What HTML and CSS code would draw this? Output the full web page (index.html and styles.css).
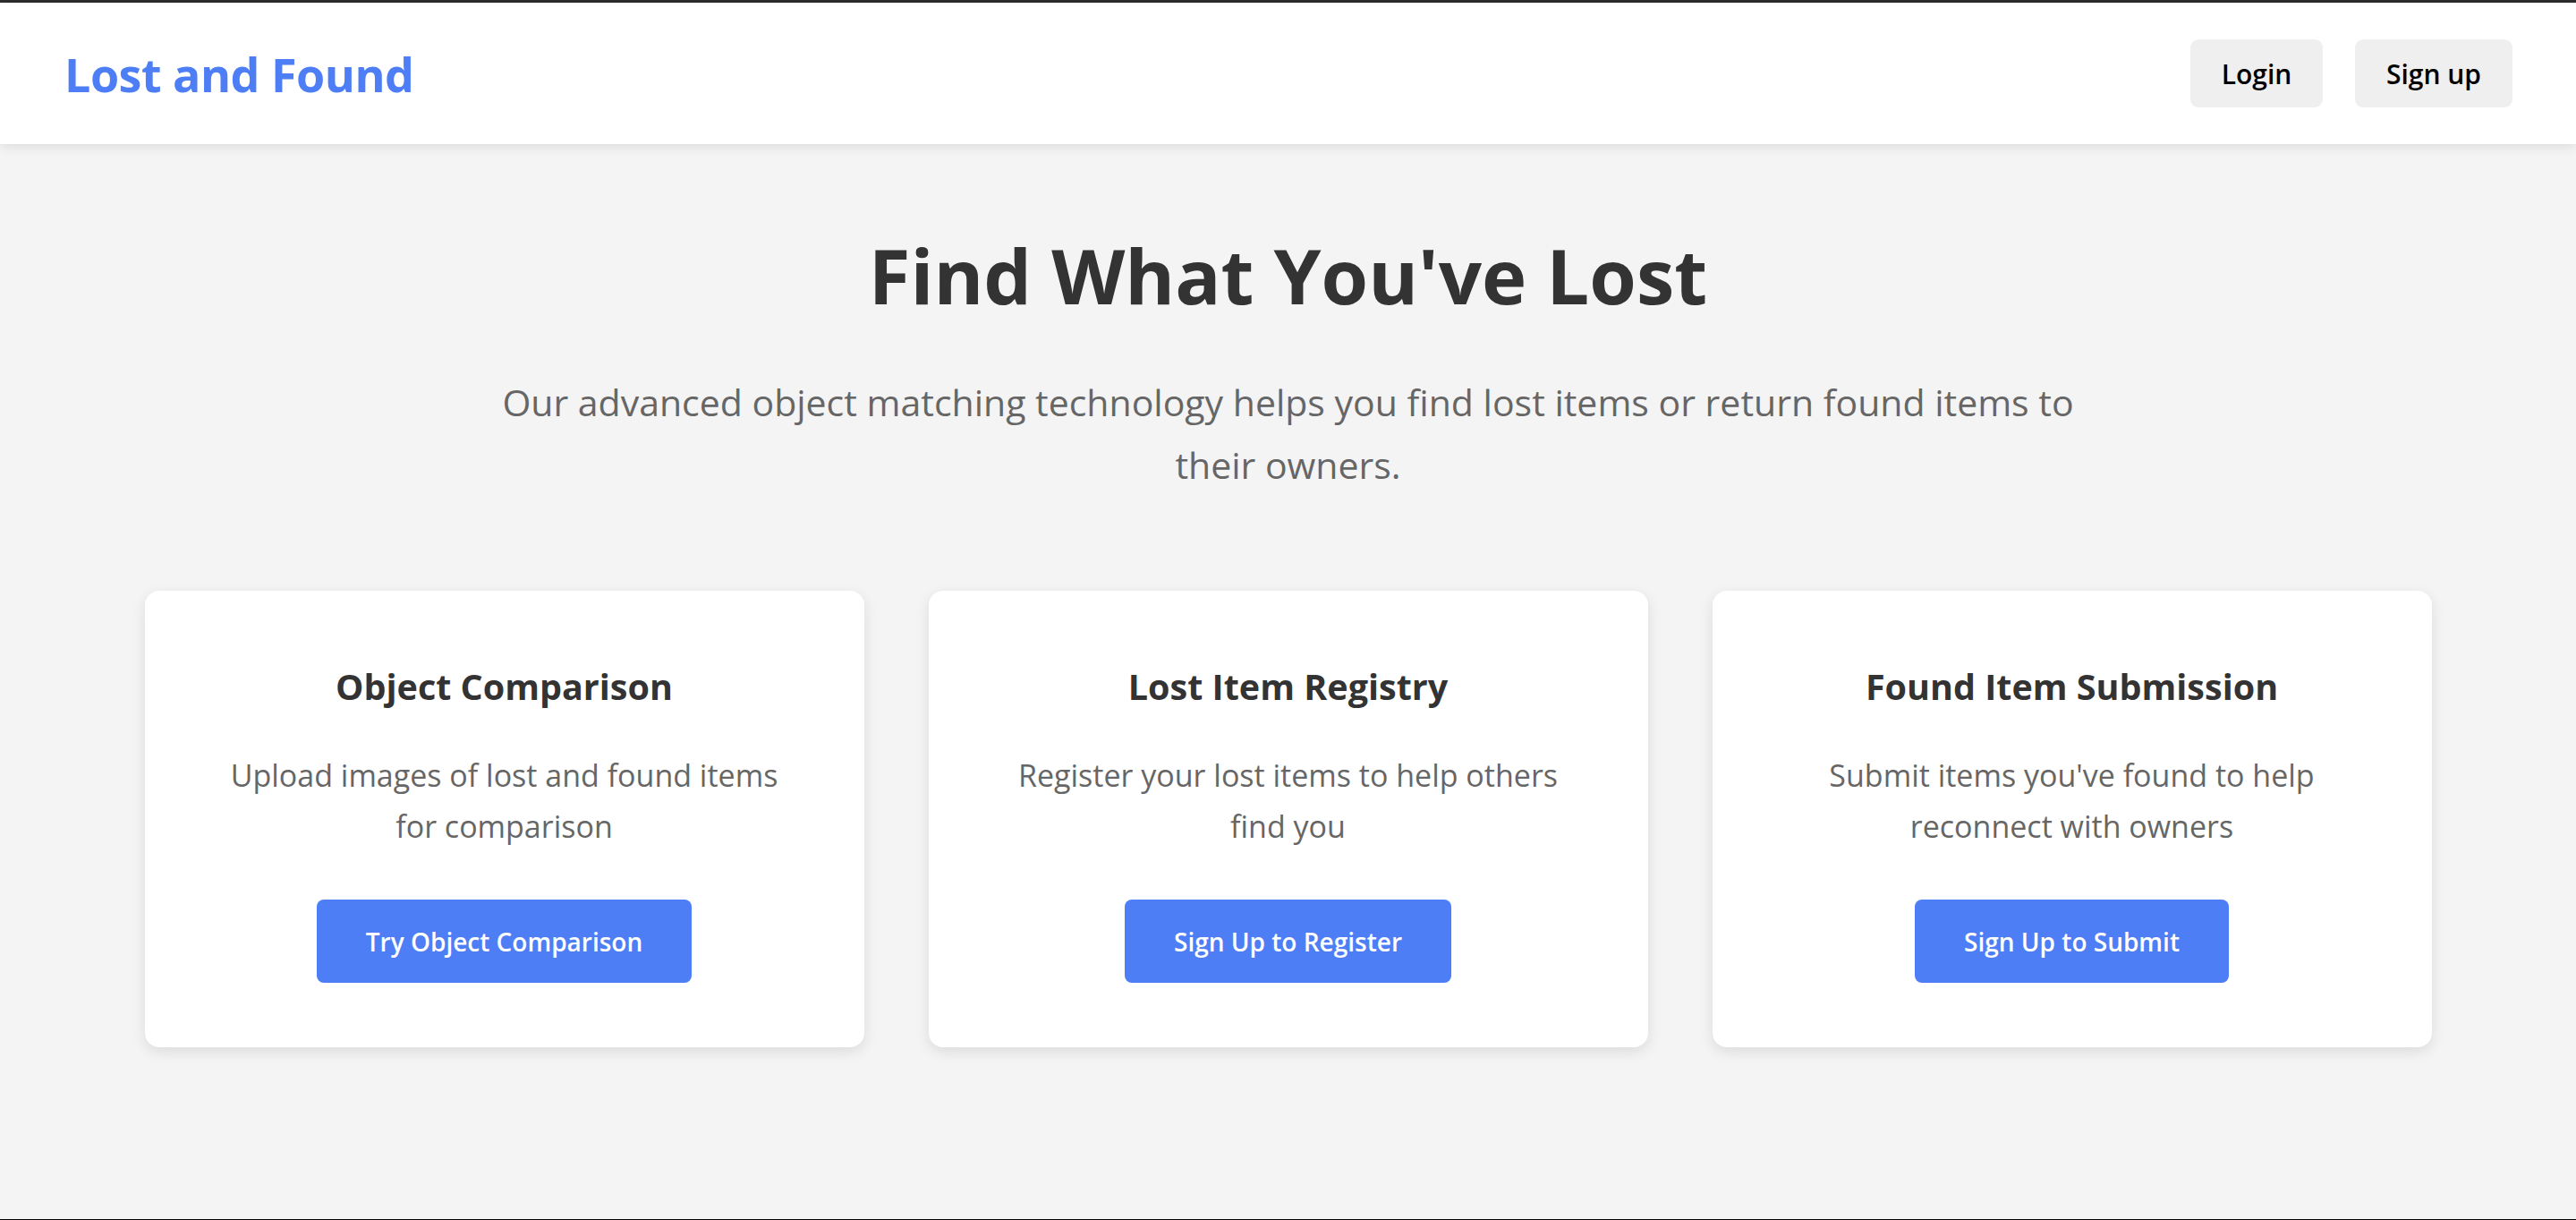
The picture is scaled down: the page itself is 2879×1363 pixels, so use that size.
FILE: index.html
```html
<!DOCTYPE html>
<html lang="en">
<head>
<meta charset="utf-8">
<title>Lost and Found</title>
<link rel="stylesheet" href="styles.css">
</head>
<body>
<div class="page">
  <header class="topbar">
    <div class="logo">Lost and Found</div>
    <nav class="nav">
      <button class="nav-btn nav-login">Login</button>
      <button class="nav-btn nav-signup">Sign up</button>
    </nav>
  </header>
  <main class="hero">
    <h1 class="hero-title">Find What You've Lost</h1>
    <p class="hero-sub">Our advanced object matching technology helps you find lost items or return found items to their owners.</p>
    <section class="cards">
      <div class="card">
        <h3 class="card-title">Object Comparison</h3>
        <p class="card-text">Upload images of lost and found items for comparison</p>
        <button class="card-btn">Try Object Comparison</button>
      </div>
      <div class="card">
        <h3 class="card-title">Lost Item Registry</h3>
        <p class="card-text">Register your lost items to help others find you</p>
        <button class="card-btn">Sign Up to Register</button>
      </div>
      <div class="card">
        <h3 class="card-title">Found Item Submission</h3>
        <p class="card-text">Submit items you've found to help reconnect with owners</p>
        <button class="card-btn">Sign Up to Submit</button>
      </div>
    </section>
  </main>
</div>
</body>
</html>
```

FILE: styles.css
```css
* { box-sizing: border-box; }
html, body { margin: 0; padding: 0; }
body {
  font-family: "Open Sans", "Noto Sans", sans-serif;
  background: #f4f4f4;
  color: #333;
}
.page {
  min-height: 100vh;
  border-top: 3px solid #2d2d30;
  border-bottom: 1px solid #000;
  display: flex;
  flex-direction: column;
}
.topbar {
  height: 158px;
  background: #fff;
  display: flex;
  align-items: center;
  justify-content: space-between;
  padding: 0 71px 0 72px;
  box-shadow: 0 3px 12px rgba(0,0,0,0.1);
  position: relative;
  z-index: 1;
}
.logo {
  font-size: 52px;
  font-weight: 700;
  color: #4e7ef6;
  letter-spacing: -0.5px;
}
.nav { display: flex; gap: 36px; }
.nav-btn {
  font-family: inherit;
  height: 76px;
  border: none;
  border-radius: 9px;
  background: #efefef;
  color: #000;
  font-size: 30px;
  font-weight: 600;
  padding: 0;
}
.nav-login { width: 148px; }
.nav-signup { width: 176px; }
.hero {
  flex: 1;
  padding-top: 92px;
  text-align: center;
}
.hero-title {
  margin: 0;
  font-size: 85px;
  line-height: 108px;
  font-weight: 700;
  color: #333;
}
.hero-sub {
  margin: 53px auto 0;
  max-width: 1800px;
  font-size: 41px;
  line-height: 70px;
  color: #666;
}
.cards {
  margin: 106px auto 0;
  width: 2556px;
  display: grid;
  grid-template-columns: repeat(3, 1fr);
  gap: 72px;
}
.card {
  height: 510px;
  background: #fff;
  border-radius: 16px;
  box-shadow: 0 5px 16px rgba(0,0,0,0.1);
  padding: 81px 69px 72px;
  display: flex;
  flex-direction: column;
  align-items: center;
}
.card-title {
  margin: 0;
  font-size: 39.5px;
  line-height: 53px;
  font-weight: 700;
  color: #333;
}
.card-text {
  margin: 44px 0 0;
  font-size: 34px;
  line-height: 57px;
  color: #666;
}
.card-btn {
  margin-top: 53px;
  font-family: inherit;
  background: #4e7ef6;
  color: #fff;
  border: none;
  border-radius: 8px;
  height: 94px;
  padding: 0 55px;
  font-size: 28px;
  font-weight: 600;
}
```
